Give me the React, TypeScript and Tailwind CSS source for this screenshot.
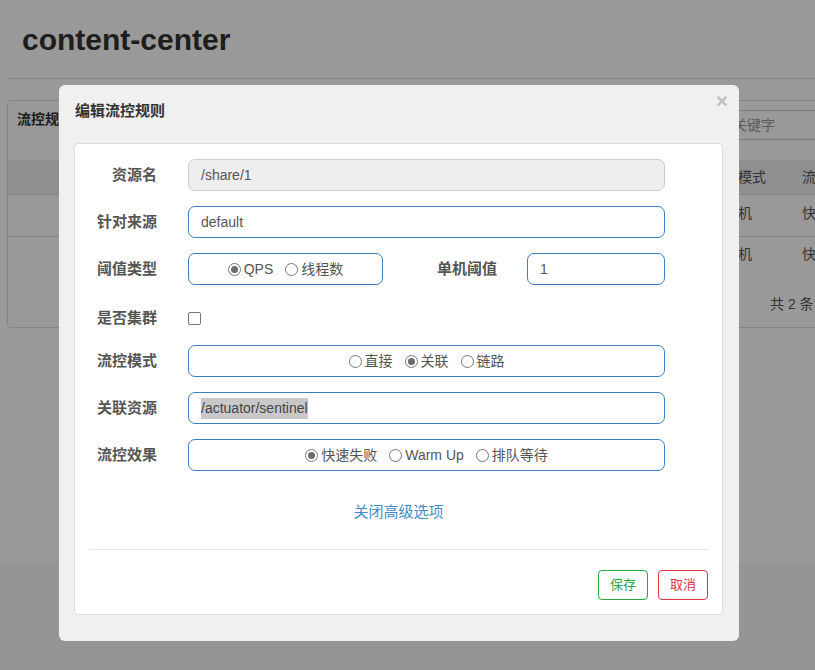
import React from "react"

const font = "font-['Liberation_Sans','Noto_Sans_CJK_SC',sans-serif]"

type RadioProps = { label: string; checked?: boolean }

const Radio: React.FC<RadioProps> = ({ label, checked }) => (
	<span className="flex items-center">
		<span className="flex h-[13px] w-[13px] items-center justify-center rounded-full border border-[#767676] bg-white">
			{checked && <span className="h-[7px] w-[7px] rounded-full bg-[#6b6b6b]" />}
		</span>
		<span className="ml-[3px] text-[14px] leading-[20px] text-[#555]">{label}</span>
	</span>
)

const RadioGroup: React.FC<{ items: RadioProps[]; className?: string }> = ({ items, className }) => (
	<div
		className={`flex h-[32px] items-center justify-center gap-[12px] rounded-[7px] border border-[#3c7fc0] bg-white ${className ?? ""}`}
	>
		{items.map((it) => (
			<Radio key={it.label} label={it.label} checked={it.checked} />
		))}
	</div>
)

const Label: React.FC<{ children: React.ReactNode; className?: string }> = ({ children, className }) => (
	<div className={`text-right text-[15px] font-bold leading-[20px] text-[#555] ${className ?? ""}`}>{children}</div>
)

const TextInput: React.FC<{ value: string; className?: string }> = ({ value, className }) => (
	<div
		className={`flex h-[32px] items-center rounded-[7px] border border-[#3c7fc0] bg-white pl-[12px] text-[14px] text-[#555] ${className ?? ""}`}
	>
		{value}
	</div>
)

const Row: React.FC<{ label: string; className?: string; children: React.ReactNode }> = ({
	label,
	className,
	children
}) => (
	<div className={`flex h-[32px] items-center ${className ?? ""}`}>
		<Label className="w-[82px]">{label}</Label>
		<div className="ml-[31px] w-[477px]">{children}</div>
	</div>
)

// columns of the rules table behind the dialog; only the last two peek out
const TableRow: React.FC<{ a: string; b: string; className: string }> = ({ a, b, className }) => (
	<div className={`flex text-[14px] leading-[20px] text-[#555] ${className}`}>
		<div className="w-[684px] shrink-0" />
		<div className="w-[92px] shrink-0 text-center">{a}</div>
		<div className="w-[92px] shrink-0 text-center">{b}</div>
	</div>
)

const Background: React.FC = () => (
	<div className="w-[900px]">
		<div className="h-[563px] bg-white pl-[7px]">
			<h1 className="pl-[15px] pt-[22px] text-[30px] font-bold leading-[36px] text-[#333]">content-center</h1>
			<div className="mt-[20px] border-t border-[#e0e0e0]" />
			<div className="mt-[21px] h-[228px] rounded-[4px] border border-[#ddd]">
				<div className="flex h-[59px] items-start">
					<div className="pl-[9px] pt-[8px] text-[14px] font-bold leading-[20px] text-[#333]">流控规则</div>
					<div className="ml-[605px] mt-[9px] flex h-[30px] w-[180px] shrink-0 items-center border border-[#ccc] pl-[12px] text-[14px] text-[#999]">
						请输入关键字
					</div>
				</div>
				<TableRow a="阈值模式" b="流控效果" className="h-[34px] items-center bg-[#edeef2]" />
				<TableRow a="单机" b="快速失败" className="h-[42px] border-t border-[#ddd] pt-[8px]" />
				<TableRow a="单机" b="快速失败" className="h-[41px] border-t border-[#ddd] pt-[7px]" />
				<div className="pl-[762px] pt-[17px] text-[14px] leading-[20px] text-[#555]">共 2 条记录</div>
			</div>
		</div>
		<div className="h-[107px] bg-[#f8f8f8]" />
	</div>
)

const Modal: React.FC = () => (
	<div className="absolute left-[59px] top-[85px] h-[556px] w-[680px] rounded-[6px] bg-[#f0f0f0]">
		<button className="absolute right-[11px] top-[5px] text-[21px] font-bold leading-[21px] text-[#c0c0c0]">×</button>
		<div className="pl-[16px] pt-[17px] text-[15px] font-bold leading-[18px] text-[#333]">编辑流控规则</div>
		<div className="ml-[15px] mt-[23px] h-[472px] w-[649px] rounded-[4px] border border-[#ddd] bg-white">
			<Row label="资源名" className="mt-[15px]">
				<div className="flex h-[32px] items-center rounded-[7px] border border-[#ccc] bg-[#eee] pl-[12px] text-[14px] text-[#555]">
					/share/1
				</div>
			</Row>
			<Row label="针对来源" className="mt-[15px]">
				<TextInput value="default" />
			</Row>
			<Row label="阈值类型" className="mt-[15px]">
				<div className="flex items-center">
					<RadioGroup
						className="w-[195px]"
						items={[{ label: "QPS", checked: true }, { label: "线程数" }]}
					/>
					<Label className="w-[114px]">单机阈值</Label>
					<TextInput value="1" className="ml-[30px] w-[138px]" />
				</div>
			</Row>
			<Row label="是否集群" className="mt-[17px]">
				<span className="mt-[1px] block h-[13px] w-[13px] rounded-[2px] border border-[#767676] bg-white" />
			</Row>
			<Row label="流控模式" className="mt-[11px]">
				<RadioGroup items={[{ label: "直接" }, { label: "关联", checked: true }, { label: "链路" }]} />
			</Row>
			<Row label="关联资源" className="mt-[15px]">
				<div className="flex h-[32px] items-center rounded-[7px] border border-[#3c7fc0] bg-white pl-[12px] text-[14px] text-[#555]">
					<span className="bg-[#c8c8c8] text-[#444]">/actuator/sentinel</span>
				</div>
			</Row>
			<Row label="流控效果" className="mt-[15px]">
				<RadioGroup
					items={[{ label: "快速失败", checked: true }, { label: "Warm Up" }, { label: "排队等待" }]}
				/>
			</Row>
			<div className="mt-[31px] text-center text-[15px] leading-[20px] text-[#428bca]">关闭高级选项</div>
			<div className="ml-[15px] mr-[14px] mt-[27px] border-t border-[#e5e5e5]" />
			<div className="mr-[14px] mt-[20px] flex justify-end gap-[10px]">
				<button className="h-[30px] w-[50px] rounded-[4px] border border-[#28a745] bg-white text-[13px] text-[#28a745]">
					保存
				</button>
				<button className="h-[30px] w-[50px] rounded-[4px] border border-[#dc3545] bg-white text-[13px] text-[#dc3545]">
					取消
				</button>
			</div>
		</div>
	</div>
)

export default function App() {
	return (
		<div className={`relative h-[670px] w-full overflow-hidden ${font}`}>
			<Background />
			<div className="absolute inset-0 bg-black/40" />
			<Modal />
		</div>
	)
}
